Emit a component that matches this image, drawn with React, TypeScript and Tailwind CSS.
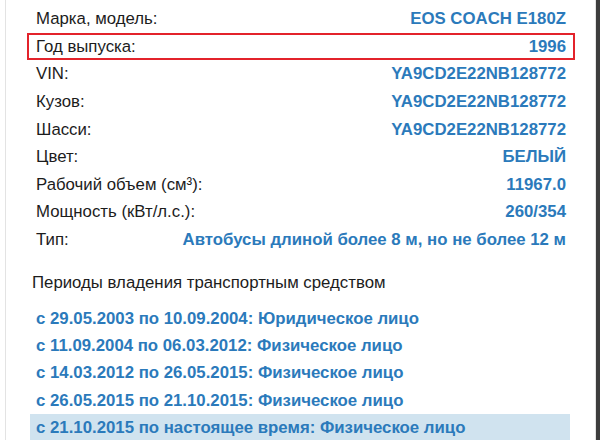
const specs: { label: string; value: string; marked?: boolean }[] = [
  { label: "Марка, модель:", value: "EOS COACH E180Z" },
  { label: "Год выпуска:", value: "1996", marked: true },
  { label: "VIN:", value: "YA9CD2E22NB128772" },
  { label: "Кузов:", value: "YA9CD2E22NB128772" },
  { label: "Шасси:", value: "YA9CD2E22NB128772" },
  { label: "Цвет:", value: "БЕЛЫЙ" },
  { label: "Рабочий объем (см³):", value: "11967.0" },
  { label: "Мощность (кВт/л.с.):", value: "260/354" },
  { label: "Тип:", value: "Автобусы длиной более 8 м, но не более 12 м" },
];

const periods: { text: string; current?: boolean }[] = [
  { text: "с 29.05.2003 по 10.09.2004: Юридическое лицо" },
  { text: "с 11.09.2004 по 06.03.2012: Физическое лицо" },
  { text: "с 14.03.2012 по 26.05.2015: Физическое лицо" },
  { text: "с 26.05.2015 по 21.10.2015: Физическое лицо" },
  { text: "с 21.10.2015 по настоящее время: Физическое лицо", current: true },
];

export default function App() {
  return (
    <div className="flex h-[440px] w-[600px] overflow-hidden bg-white font-['Liberation_Sans',Arial,sans-serif] text-[16.8px]">
      <div className="w-[5px]" />
      <div className="flex-1 border-x border-[#e3e3e3] pt-[5px]">
        <div className="ml-[21px] w-[548px]">
          {specs.map((row) => (
            <div
              key={row.label}
              className={`flex h-[27.6px] items-center justify-between border-2 px-[7px] ${
                row.marked ? "border-[#e3232b]" : "border-transparent"
              }`}
            >
              <span className="text-[#1c1c1c]">{row.label}</span>
              <span className="font-bold text-[#2b7abb]">{row.value}</span>
            </div>
          ))}
        </div>

        <div className="ml-[26px] mt-[17px] text-[#1c1c1c]">Периоды владения транспортным средством</div>

        <div className="ml-[24px] mt-[9px] w-[540px]">
          {periods.map((p) => (
            <div
              key={p.text}
              className={`flex h-[27.4px] items-center px-[6px] font-bold text-[#2b7abb] ${
                p.current ? "bg-[#d0e3ef]" : ""
              }`}
            >
              {p.text}
            </div>
          ))}
        </div>
      </div>
      <div className="w-[4px] bg-[#3d3d3d]" />
    </div>
  );
}
